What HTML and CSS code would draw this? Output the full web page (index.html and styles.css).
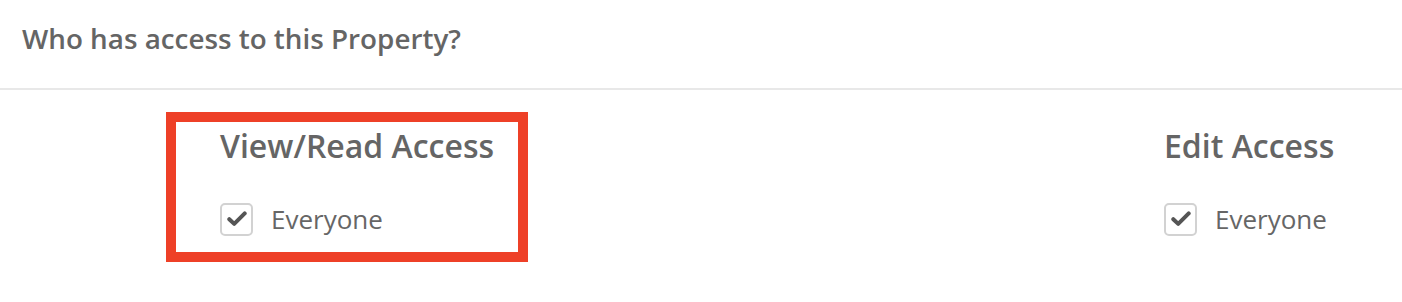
FILE: index.html
```html
<!DOCTYPE html>
<html lang="en">
<head>
<meta charset="utf-8">
<title>Property access</title>
<link rel="stylesheet" href="styles.css">
</head>
<body>
<div class="panel">
  <div class="panel-header">
    <h2 class="panel-title">Who has access to this Property?</h2>
  </div>
  <div class="panel-body">
    <section class="access access-highlight">
      <h3 class="access-title">View/Read Access</h3>
      <label class="option">
        <span class="checkbox"><svg viewBox="0 0 20 16" width="20" height="16"><path d="M2.3 8.2 L7.2 12.9 L17.7 2.4" fill="none" stroke="#555" stroke-width="4" stroke-linecap="round" stroke-linejoin="round"/></svg></span>
        <span class="option-label">Everyone</span>
      </label>
    </section>
    <section class="access access-right">
      <h3 class="access-title">Edit Access</h3>
      <label class="option">
        <span class="checkbox"><svg viewBox="0 0 20 16" width="20" height="16"><path d="M2.3 8.2 L7.2 12.9 L17.7 2.4" fill="none" stroke="#555" stroke-width="4" stroke-linecap="round" stroke-linejoin="round"/></svg></span>
        <span class="option-label">Everyone</span>
      </label>
    </section>
  </div>
</div>
</body>
</html>
```

FILE: styles.css
```css
* { box-sizing: border-box; }
html, body { margin: 0; padding: 0; background: #fff; }
body { font-family: "Open Sans", "Liberation Sans", sans-serif; color: #666; }

.panel-header {
  height: 90px;
  padding: 20px 0 0 22px;
  border-bottom: 2px solid #e8e8e8;
}
.panel-title {
  margin: 0;
  font-size: 27.8px;
  line-height: 36px;
  font-weight: 600;
  color: #656565;
}

.panel-body {
  display: flex;
  padding: 22px 0 0 166px;
}

.access-highlight {
  width: 362px;
  height: 150px;
  border: 10px solid #ee4027;
  padding: 4px 0 0 44px;
}
.access-right {
  margin-left: auto;
  width: 238px;
  padding: 14px 0 0 0;
}

.access-title {
  margin: 0;
  font-size: 32px;
  font-weight: 600;
  line-height: 40px;
  color: #656565;
}

.option {
  display: flex;
  align-items: center;
  margin-top: 35px;
  gap: 18px;
}
.checkbox {
  width: 33px;
  height: 33px;
  border: 2px solid #d2d2d2;
  border-radius: 5px;
  display: flex;
  align-items: center;
  justify-content: center;
}
.option-label {
  font-size: 26px;
  color: #666;
}
```
